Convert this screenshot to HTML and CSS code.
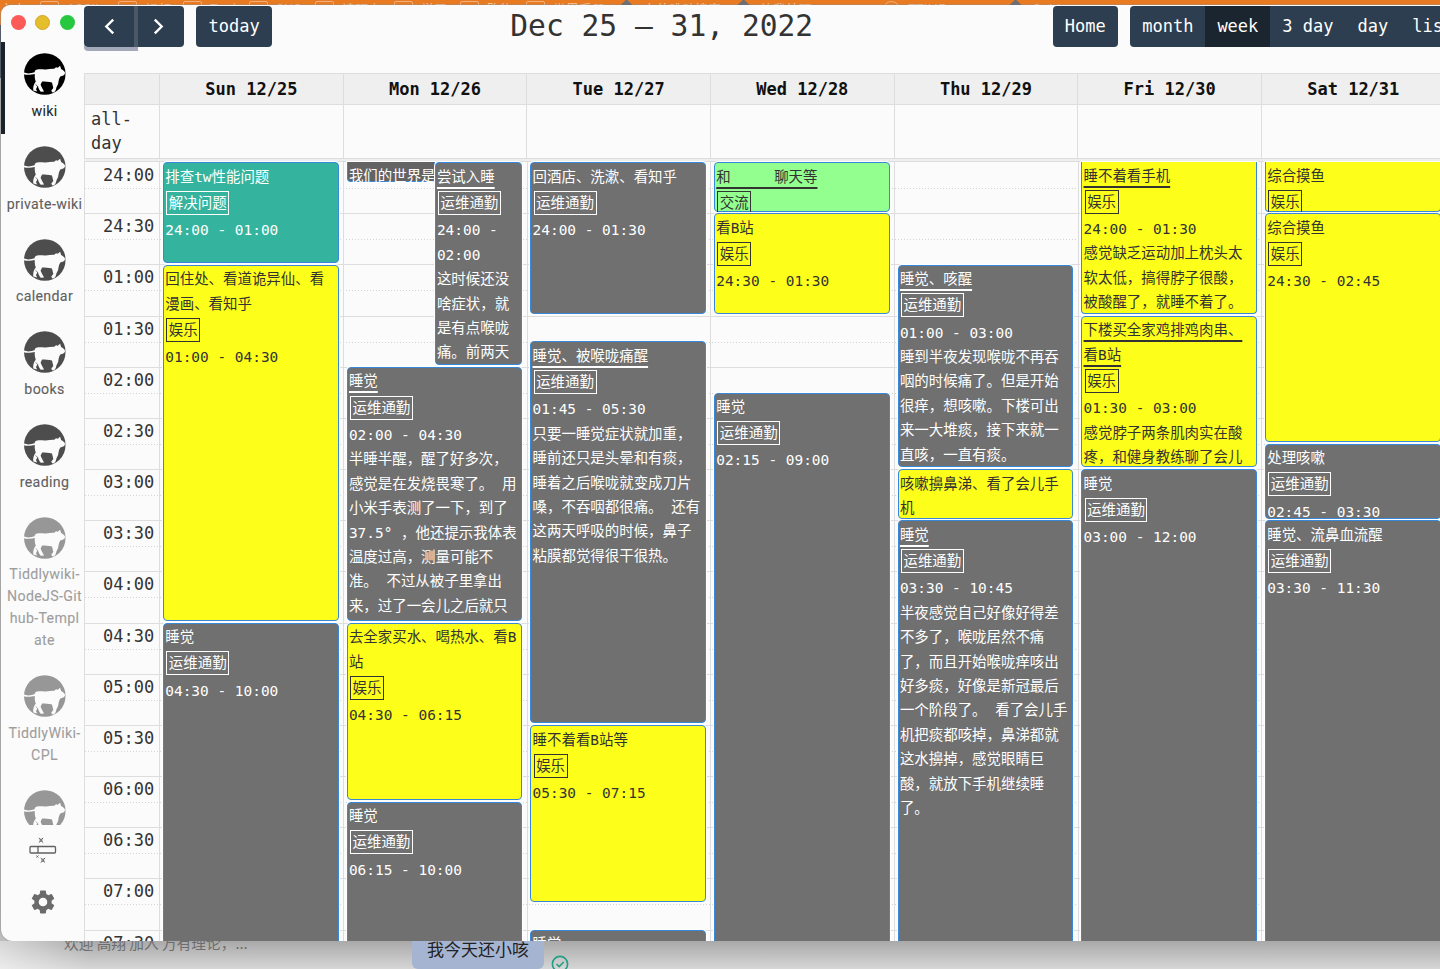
FILE: index.html
```html
<!DOCTYPE html>
<html lang="zh-CN">
<head>
<meta charset="utf-8">
<title>Calendar</title>
<link rel="stylesheet" href="styles.css">
</head>
<body>
<svg width="0" height="0" class="defs">
  <symbol id="cat" viewBox="0 0 42 42">
    <circle cx="21" cy="21" r="20.8" fill="currentColor"/>
    <path fill="#fbfbfb" d="M0 19.600C4 21 7.500 20.300 10.800 19.200C11 17.500 12 16.800 13.500 16.600C16 15.800 19 16.600 22 16.400C25 16.200 28 15.600 30.500 15.800L32.200 14.200L34 14.800L36.300 12.800L37.300 16C39 17 41 18 41.300 20C41 22.300 38.500 23 36.500 23.500C35 26 34.800 28 34.300 31L32.600 34.500C32 38 31 39.800 28.300 39.300L27.500 37.500L29.500 35L28.200 29.500C25 28.500 21 28.700 18.300 28.500L16.800 31.500C17.200 33.500 19 36 20.300 38.600L17 38.800C15.500 37 14.600 35 14 33C12.500 35 12 36.500 13.300 38.500L9.500 37.500C9 34 10 31 12 28.500C11 26 10.800 23.500 11 21C8 21.800 3 22.300 0 21.300Z"/>
    <path fill="none" stroke="currentColor" stroke-width=".7" d="M11.800 31.500L14 33.500L12.600 37"/>
  </symbol>
</svg>
<div class="bookmarks"><span class="bare">文本</span><span>ASCII</span><span>视频</span><span>Tools</span><span>SNS</span><span>读预士</span><span>学习</span><span>购物</span><span>世界手册</span><span class="mark">文艺跳动搜索</span><span class="mark">待我处理</span><span class="globe">TTIME</span><span class="mark">Guide</span></div>
<div class="window">
  <aside class="sidebar">
    <div class="lights"><i class="red"></i><i class="amber"></i><i class="lime"></i></div>
    <div class="list">
      <div class="ws active"><svg><use href="#cat"/></svg><p>wiki</p></div>
      <div class="ws"><svg><use href="#cat"/></svg><p>private-wiki</p></div>
      <div class="ws"><svg><use href="#cat"/></svg><p>calendar</p></div>
      <div class="ws"><svg><use href="#cat"/></svg><p>books</p></div>
      <div class="ws"><svg><use href="#cat"/></svg><p>reading</p></div>
      <div class="ws dim"><svg><use href="#cat"/></svg><p>Tiddlywiki-<br>NodeJS-Git<br>hub-Templ<br>ate</p></div>
      <div class="ws dim"><svg><use href="#cat"/></svg><p>TiddlyWiki-<br>CPL</p></div>
      <div class="ws dim"><svg><use href="#cat"/></svg></div>
    </div>
    <div class="tools">
      <svg class="wand" viewBox="0 0 28 28" fill="none" stroke="#606060" stroke-width="1.300"><rect x="1" y="10.500" width="25.500" height="6.500" rx="1"/><path d="M9 10.500v6.500"/><path stroke-width="1" d="M9.800 2l1.400 1.200h1.600L14.200 2M9.800 6.500l1.400-1.200M14.200 6.500l-1.400-1.200M11.200 3.200v2.100h1.600v-2.100M11.700 22l1.400 1.200h1.600l1.400-1.200M11.700 26.500l1.400-1.200M16.100 26.500l-1.400-1.200M13.100 23.200v2.100h1.600v-2.100M7.400 19.500l2 2M9.400 19.500l-2 2"/></svg>
      <svg class="gear" viewBox="2 2 20 20" fill="#6b6b6b"><path d="M19.140 12.940c.04-.3.06-.61.06-.94 0-.32-.02-.64-.07-.94l2.030-1.580c.18-.14.23-.41.12-.61l-1.920-3.320c-.12-.22-.37-.29-.59-.22l-2.390.96c-.5-.38-1.030-.7-1.620-.94l-.36-2.540c-.04-.24-.24-.41-.48-.41h-3.840c-.24 0-.43.17-.47.41l-.36 2.540c-.59.24-1.130.57-1.620.94l-2.390-.96c-.22-.08-.47 0-.59.22L2.740 8.870c-.12.21-.08.47.12.61l2.030 1.580c-.05.3-.09.63-.09.94s.02.64.07.94l-2.030 1.580c-.18.14-.23.41-.12.61l1.920 3.320c.12.22.37.29.59.22l2.390-.96c.5.38 1.030.7 1.620.94l.36 2.540c.05.24.24.41.48.41h3.840c.24 0 .44-.17.47-.41l.36-2.540c.59-.24 1.130-.56 1.620-.94l2.390.96c.22.08.47 0 .59-.22l1.920-3.320c.12-.22.07-.47-.12-.61l-2.010-1.580zM12 15.600c-1.980 0-3.600-1.620-3.600-3.600s1.620-3.600 3.600-3.600 3.600 1.620 3.600 3.600-1.620 3.600-3.600 3.600z"/></svg>
    </div>
  </aside>
  <main class="calendar">
    <header class="toolbar">
      <div class="group">
        <button class="arrow focused"><svg viewBox="0 0 10 16"><path d="M8.500 1.500L2 8l6.500 6.500"/></svg></button><button class="arrow"><svg viewBox="0 0 10 16"><path d="M1.500 1.500L8 8l-6.500 6.500"/></svg></button>
      </div>
      <div class="group"><button>today</button></div>
      <h2>Dec 25 – 31, 2022</h2>
      <div class="group"><button>Home</button></div>
      <div class="group views"><button>month</button><button class="on">week</button><button>3 day</button><button>day</button><button>list</button></div>
    </header>
    <div class="row head"><div></div><div>Sun 12/25</div><div>Mon 12/26</div><div>Tue 12/27</div><div>Wed 12/28</div><div>Thu 12/29</div><div>Fri 12/30</div><div>Sat 12/31</div></div>
    <div class="row allday"><div>all-<br>day</div><div></div><div></div><div></div><div></div><div></div><div></div><div></div></div>
    <div class="divider"></div>
    <div class="times">
      <div class="axis">
        <div>24:00</div><div>24:30</div><div>01:00</div><div>01:30</div><div>02:00</div><div>02:30</div><div>03:00</div><div>03:30</div><div>04:00</div><div>04:30</div><div>05:00</div><div>05:30</div><div>06:00</div><div>06:30</div><div>07:00</div><div>07:30</div>
      </div>
      <div class="day">
        <article class="ev teal" style="grid-row:1/5"><h3>排查tw性能问题</h3><b>解决问题</b><p>24:00 - 01:00</p></article>
        <article class="ev yellow" style="grid-row:5/19"><h3>回住处、看道诡异仙、看<br>漫画、看知乎</h3><b>娱乐</b><p>01:00 - 04:30</p></article>
        <article class="ev gray" style="grid-row:19/33"><h3>睡觉</h3><b>运维通勤</b><p>04:30 - 10:00</p></article>
      </div>
      <div class="day">
        <article class="ev gray cut sliver" style="grid-row:1/2"><h3>我们的世界是</h3></article>
        <article class="ev gray half" style="grid-row:1/9"><h3><u>尝试入睡</u></h3><b>运维通勤</b><p>24:00 -<br>02:00</p><p>这时候还没<br>啥症状，就<br>是有点喉咙<br>痛。前两天</p></article>
        <article class="ev gray" style="grid-row:9/19"><h3><u>睡觉</u></h3><b>运维通勤</b><p>02:00 - 04:30</p><p>半睡半醒，醒了好多次，<br>感觉是在发烧畏寒了。 用<br>小米手表测了一下，到了<br>37.5° ，他还提示我体表<br>温度过高，测量可能不<br>准。 不过从被子里拿出<br>来，过了一会儿之后就只</p></article>
        <article class="ev yellow" style="grid-row:19/26"><h3>去全家买水、喝热水、看B<br>站</h3><b>娱乐</b><p>04:30 - 06:15</p></article>
        <article class="ev gray" style="grid-row:26/33"><h3>睡觉</h3><b>运维通勤</b><p>06:15 - 10:00</p></article>
      </div>
      <div class="day">
        <article class="ev gray" style="grid-row:1/7"><h3>回酒店、洗漱、看知乎</h3><b>运维通勤</b><p>24:00 - 01:30</p></article>
        <article class="ev gray" style="grid-row:8/23"><h3><u>睡觉、被喉咙痛醒</u></h3><b>运维通勤</b><p>01:45 - 05:30</p><p>只要一睡觉症状就加重，<br>睡前还只是头晕和有痰，<br>睡着之后喉咙就变成刀片<br>嗓，不吞咽都很痛。 还有<br>这两天呼吸的时候，鼻子<br>粘膜都觉得很干很热。</p></article>
        <article class="ev yellow" style="grid-row:23/30"><h3>睡不着看B站等</h3><b>娱乐</b><p>05:30 - 07:15</p></article>
        <article class="ev gray" style="grid-row:31/33"><h3>睡觉</h3></article>
      </div>
      <div class="day">
        <article class="ev green" style="grid-row:1/3"><h3><u>和&nbsp;&nbsp;&nbsp;&nbsp;&nbsp;聊天等</u></h3><b>交流</b></article>
        <article class="ev yellow" style="grid-row:3/7"><h3>看B站</h3><b>娱乐</b><p>24:30 - 01:30</p></article>
        <article class="ev gray" style="grid-row:10/33"><h3>睡觉</h3><b>运维通勤</b><p>02:15 - 09:00</p></article>
      </div>
      <div class="day">
        <article class="ev gray" style="grid-row:5/13"><h3><u>睡觉、咳醒</u></h3><b>运维通勤</b><p>01:00 - 03:00</p><p>睡到半夜发现喉咙不再吞<br>咽的时候痛了。但是开始<br>很痒，想咳嗽。下楼可出<br>来一大堆痰，接下来就一<br>直咳，一直有痰。</p></article>
        <article class="ev yellow" style="grid-row:13/15"><h3>咳嗽擤鼻涕、看了会儿手<br>机</h3></article>
        <article class="ev gray" style="grid-row:15/33"><h3><u>睡觉</u></h3><b>运维通勤</b><p>03:30 - 10:45</p><p>半夜感觉自己好像好得差<br>不多了，喉咙居然不痛<br>了，而且开始喉咙痒咳出<br>好多痰，好像是新冠最后<br>一个阶段了。 看了会儿手<br>机把痰都咳掉，鼻涕都就<br>这水擤掉，感觉眼睛巨<br>酸，就放下手机继续睡<br>了。</p></article>
      </div>
      <div class="day">
        <article class="ev yellow cut" style="grid-row:1/7"><h3><u>睡不着看手机</u></h3><b>娱乐</b><p>24:00 - 01:30</p><p>感觉缺乏运动加上枕头太<br>软太低，搞得脖子很酸，<br>被酸醒了，就睡不着了。</p></article>
        <article class="ev yellow" style="grid-row:7/13"><h3><u>下楼买全家鸡排鸡肉串、<br>看B站</u></h3><b>娱乐</b><p>01:30 - 03:00</p><p>感觉脖子两条肌肉实在酸<br>疼，和健身教练聊了会儿</p></article>
        <article class="ev gray" style="grid-row:13/33"><h3>睡觉</h3><b>运维通勤</b><p>03:00 - 12:00</p></article>
      </div>
      <div class="day">
        <article class="ev yellow cut" style="grid-row:1/3"><h3>综合摸鱼</h3><b>娱乐</b></article>
        <article class="ev yellow" style="grid-row:3/12"><h3>综合摸鱼</h3><b>娱乐</b><p>24:30 - 02:45</p></article>
        <article class="ev gray" style="grid-row:12/15"><h3>处理咳嗽</h3><b>运维通勤</b><p>02:45 - 03:30</p></article>
        <article class="ev gray" style="grid-row:15/33"><h3>睡觉、流鼻血流醒</h3><b>运维通勤</b><p>03:30 - 11:30</p></article>
      </div>
    </div>
  </main>
</div>
<footer class="behind">
  <span class="preview">欢迎 高翔 加入 万有理论，...</span>
  <span class="bubble">我今天还小咳</span>
  <svg class="check" viewBox="0 0 18 18" fill="none" stroke="#239f86" stroke-width="1.600"><circle cx="9" cy="9" r="7.600"/><path d="M5.500 9l2.700 2.600 4.500-4.600"/></svg>
</footer>
</body>
</html>
```
FILE: styles.css
```css
* { box-sizing: border-box; }
html, body { margin: 0; height: 969px; overflow: hidden; }
body {
  display: flex;
  flex-direction: column;
  background: linear-gradient(#e87a22 0 25px, #2b3a4b 25px 78px, #b4b4b4 78px 900px, #c4c4c4 969px);
  font-family: "DejaVu Sans Mono", "Noto Sans CJK SC", monospace;
  color: #333;
}
h2, h3, p { margin: 0; font-weight: 400; }
.defs { display: none; }

.bookmarks {
  flex: none;
  height: 5px;
  overflow: hidden;
  display: grid;
  grid-template-columns: 40px 78px 65px 66px 66px 79px 66px 66px 92px 117px 148px 124px 100px;
  font: 13px/18px "Noto Sans CJK SC", sans-serif;
  color: #f7c9a0;
  white-space: nowrap;
}
.bookmarks span { display: flex; gap: 8px; height: 18px; }
.bookmarks span::before { content: ""; width: 17px; height: 13px; margin-top: 1px; border: 1.500px solid #f0b080; border-radius: 2px; }
.bookmarks .bare::before { display: none; }
.bookmarks .mark::before { width: 9px; height: 9px; margin: 1px 4px 0; border: 0; border-radius: 0; background: #6d6f73; transform: rotate(45deg); }
.bookmarks .globe::before { width: 15px; height: 15px; border-radius: 50%; }

.window {
  flex: none;
  height: 935.500px;
  margin-left: 1px;
  display: flex;
  overflow: hidden;
  background: #fbfbfb;
  border-radius: 9px 0 0 12px;
  box-shadow: 0 0 0 1px #8f8f8f66;
}

/* sidebar */
.sidebar {
  flex: none;
  width: 83px;
  display: flex;
  flex-direction: column;
  font: 500 14.200px/22px Roboto, sans-serif;
  text-align: center;
}
.lights { height: 36.500px; padding: 9.500px 0 0 9.500px; display: flex; gap: 9.500px; }
.lights i { width: 15px; height: 15px; border-radius: 50%; }
.red { background: #fc5b57; }
.amber { background: #e5bf2b; border: 1px solid #d6a32a; }
.lime { background: #27c840; }
.list { height: 783px; overflow: hidden; }
.ws { padding: 11.800px 0 12.300px; color: #4d4d4d; }
.ws svg { display: block; width: 42px; height: 42px; margin: 0 auto; transform: translateX(1.800px); }
.ws p { margin: 4.600px -4px 0 0; letter-spacing: .32px; color: #606060; white-space: nowrap; -webkit-text-stroke: .1px; }
.ws.active { border-left: 4px solid #1a232b; color: #000; }
.ws.active svg { transform: translateX(-.2px); }
.ws.active p { color: #22272b; margin-right: 0; }
.ws.dim { color: #979797; }
.ws.dim p { color: #9e9e9e; }
.tools { display: flex; flex-direction: column; align-items: center; gap: 26px; padding-top: 11.500px; }
.wand { width: 28px; height: 28px; }
.gear { width: 24px; height: 24px; }

/* toolbar */
.calendar { flex: 1; min-width: 0; overflow: hidden; }
.toolbar { display: flex; width: 1381.200px; height: 68px; align-items: flex-start; padding-top: .5px; }
.group { display: flex; height: 41.500px; margin-right: 12.500px; border-radius: 4px; background: #2c3e50; flex: none; }
.toolbar h2 { flex: 1; text-align: center; font-size: 29.600px; line-height: 41px; margin: 0 1px 0 -13px; }
.toolbar button { margin: 0; border: 0; background: none; color: #fff; font: 17px/41px "DejaVu Sans Mono", monospace; padding: 0 12px; }
.toolbar .on { background: #1a252f; }
.toolbar .group:nth-child(2) button { padding: 0 12.500px; }
.toolbar .arrow { width: 49.500px; padding: 0; display: flex; align-items: center; justify-content: center; }
.arrow svg { width: 11px; height: 17px; fill: none; stroke: #fff; stroke-width: 2.200; }
.toolbar .focused { border-right: 4px solid #4b5868; border-radius: 4px 0 0 4px; width: 53.500px; box-shadow: 0 4px 0 #a3a9b8; padding-left: 1px; }
.toolbar .focused + .arrow { width: 46px; padding-right: 5px; }
.views { margin-right: 0; }

/* grid */
.row { display: grid; grid-template-columns: 75px repeat(7, 183.660px); width: max-content; border-left: 1px solid #ddd; border-top: 1px solid #ddd; }
.row div { border-right: 1px solid #ddd; }
.head { height: 31px; background: #efefef; font-weight: 700; font-size: 17px; line-height: 30px; text-align: center; color: #111; }
.allday { height: 53.500px; font-size: 17px; line-height: 24.500px; }
.allday div:first-child { padding: 1.500px 6px; }
.divider { height: 4.500px; background: #eee; border: 1px solid #ddd; border-width: 1px 0; }
.times {
  display: grid;
  grid-template-columns: 75.400px repeat(7, 183.660px);
  width: max-content;
}
.axis, .day { grid-row: 1; }
.axis { grid-column: 1 / -1; border-left: 1px solid #ddd; }
.axis div {
  height: 51.180px;
  border-top: 1px solid #ddd;
  width: 100%;
  font-size: 17px;
  line-height: 25px;
  padding-left: 18px;
  background: linear-gradient(90deg, #d4d4d4 50%, #fbfbfb00 50%) 0 25px / 3px 1px repeat-x;
}
.axis div:first-child { border-top-color: transparent; }
.day {
  display: grid;
  grid-template-rows: repeat(32, 25.590px);
  grid-template-columns: 88px 87.500px;
  padding-left: 2.700px;
  border-left: 1px solid #ddd;
  height: 818.880px;
}
.day:nth-child(2) { grid-column: 2; }
.day:nth-child(3) { grid-column: 3; }
.day:nth-child(4) { grid-column: 4; }
.day:nth-child(5) { grid-column: 5; }
.day:nth-child(6) { grid-column: 6; }
.day:nth-child(7) { grid-column: 7; }
.day:nth-child(8) { grid-column: 8; }
.ev {
  grid-column: 1 / 3;
  margin: .3px 0 1.500px;
  padding: 1.500px 0 0 1.200px;
  border: 1px solid #3788d8;
  border-radius: 4px;
  box-shadow: 0 0 0 1px #fff;
  font-size: 14.450px;
  line-height: 24.400px;
  white-space: nowrap;
  overflow: clip;
  overflow-clip-margin: 1px;
}
.ev h3, .ev p { font-size: inherit; line-height: inherit; }
.ev b { display: block; width: max-content; height: 24px; margin: 1.700px 0 3.400px 1px; padding: 0 1.600px; border: 1px solid; font-weight: 400; line-height: 22.500px; }
.ev u { text-decoration: underline 2px; text-underline-offset: 4.500px; text-decoration-skip-ink: none; }
.gray { background: #707070; color: #fff; }
.yellow { background: #fdff1a; color: #333; }
.teal { background: #34b49e; color: #fff; }
.green { background: #93ff8f; color: #333; }
.cut { border-top: 0; border-radius: 0 0 4px 4px; padding-top: 1.500px; margin-top: 0; }
.sliver { grid-column: 1; margin-bottom: 6px; background: #636363; }
.half { grid-column: 2; }

/* chat window below */
.behind {
  flex: 1;
  display: flex;
  align-items: flex-start;
  overflow: hidden;
  background: linear-gradient(90deg, #ffffff88, #fff0 90px), linear-gradient(#a9a9a9, #d6d6d6);
  font-family: "Noto Sans CJK SC", sans-serif;
}
.preview { width: 348px; margin: -8px 0 0 64px; font-size: 14.700px; line-height: 20px; color: #6d6d6d; }
.bubble { width: 132px; height: 28px; border-radius: 0 0 6px 6px; background: #a5b4d1; padding-left: 15px; font-size: 17px; line-height: 15px; color: #222; }
.check { width: 18px; height: 18px; margin: 14px 0 0 7px; flex: none; }
```
